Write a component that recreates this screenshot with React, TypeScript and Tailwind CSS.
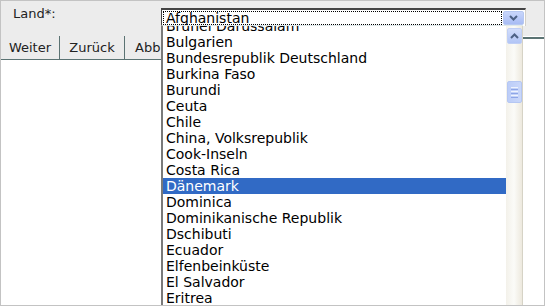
import React from 'react';

const countries = [
    'Brunei Darussalam',
    'Bulgarien',
    'Bundesrepublik Deutschland',
    'Burkina Faso',
    'Burundi',
    'Ceuta',
    'Chile',
    'China, Volksrepublik',
    'Cook-Inseln',
    'Costa Rica',
    'Dänemark',
    'Dominica',
    'Dominikanische Republik',
    'Dschibuti',
    'Ecuador',
    'Elfenbeinküste',
    'El Salvador',
    'Eritrea',
];

const selected = 'Dänemark';

const Chevron = ({ up = false }: { up?: boolean }) => (
    <svg width="9" height="6" viewBox="0 0 9 6" className={up ? 'rotate-180' : ''}>
        <path d="M1 1 L4.5 4.5 L8 1" fill="none" stroke="#4d6185" strokeWidth="2" />
    </svg>
);

export default function App() {
    return (
        <div
            className="relative w-[545px] h-[306px] overflow-hidden border border-[#c3c3c3] bg-white text-[13px] text-black"
            style={{ fontFamily: '"DejaVu Sans", Verdana, sans-serif' }}
        >
            {/* header */}
            <div className="h-[35px] bg-[#ececec] flex items-start">
                <div className="w-[160px] shrink-0 pl-[12px] pt-[5px] leading-[16px] text-[#222]">Land*:</div>
                <div className="mt-[7px] w-[365px] h-[18px] border-t-2 border-l border-[#444] border-r border-r-[#d4d0c8] bg-white flex items-stretch p-px">
                    <div className="flex-1 border border-dotted border-black text-[14px] leading-[12px] pl-[2px] text-black">Afghanistan</div>
                    <div className="w-[21px] ml-[1px] rounded-[2px] border border-[#b7c8f2] bg-gradient-to-b from-[#c9d6fb] to-[#a8bcf4] flex items-center justify-center">
                        <Chevron />
                    </div>
                </div>
            </div>

            {/* button row */}
            <div className="flex h-[24px]">
                <button className="w-[59px] bg-[#ececec] border-r border-b border-[#5b7373] text-[#222] leading-[20px]">Weiter</button>
                <button className="w-[65px] bg-[#ececec] border-r border-b border-[#5b7373] text-[#222] leading-[20px]">Zurück</button>
                <button className="px-[10px] bg-[#ececec] border-r border-b border-[#5b7373] text-[#222] leading-[20px]">Abbrechen</button>
                <div className="flex-1 border-t-2 border-[#5b7373] mt-[1px]" />
            </div>

            {/* open dropdown list */}
            <div className="absolute left-[160px] top-[24px] w-[362px] h-[290px] bg-white border-l-2 border-[#7a7a7a] border-t border-t-[#dfe9ea] flex text-[14px]">
                <div className="flex-1 overflow-hidden">
                    <div className="-mt-[8px]">
                        {countries.map(c => (
                            <div
                                key={c}
                                className={`h-[16px] leading-[16px] pl-[3px] whitespace-nowrap ${c === selected ? 'bg-[#316ac5] text-white' : ''}`}
                            >
                                {c}
                            </div>
                        ))}
                    </div>
                </div>
                <div className="w-[17px] bg-gradient-to-r from-[#f3f1ea] via-[#fbfbf8] to-[#ede9de] border-r border-[#d6d3c6] flex flex-col items-center pt-[2px]">
                    <div className="w-[15px] h-[16px] rounded-[2px] border border-[#c0cff5] bg-gradient-to-b from-[#d2ddfb] to-[#b2c5f6] flex items-center justify-center">
                        <Chevron up />
                    </div>
                    <div className="mt-[37px] w-[15px] h-[22px] rounded-[2px] border border-[#b5c7f3] bg-gradient-to-r from-[#bccdf8] to-[#c9d7fa] flex flex-col items-center justify-center gap-[1px]">
                        <div className="w-[7px] h-px bg-[#eef3fd]" />
                        <div className="w-[7px] h-px bg-[#8ea6e6]" />
                        <div className="w-[7px] h-px bg-[#eef3fd]" />
                        <div className="w-[7px] h-px bg-[#8ea6e6]" />
                        <div className="w-[7px] h-px bg-[#eef3fd]" />
                        <div className="w-[7px] h-px bg-[#8ea6e6]" />
                    </div>
                </div>
            </div>
        </div>
    );
}
